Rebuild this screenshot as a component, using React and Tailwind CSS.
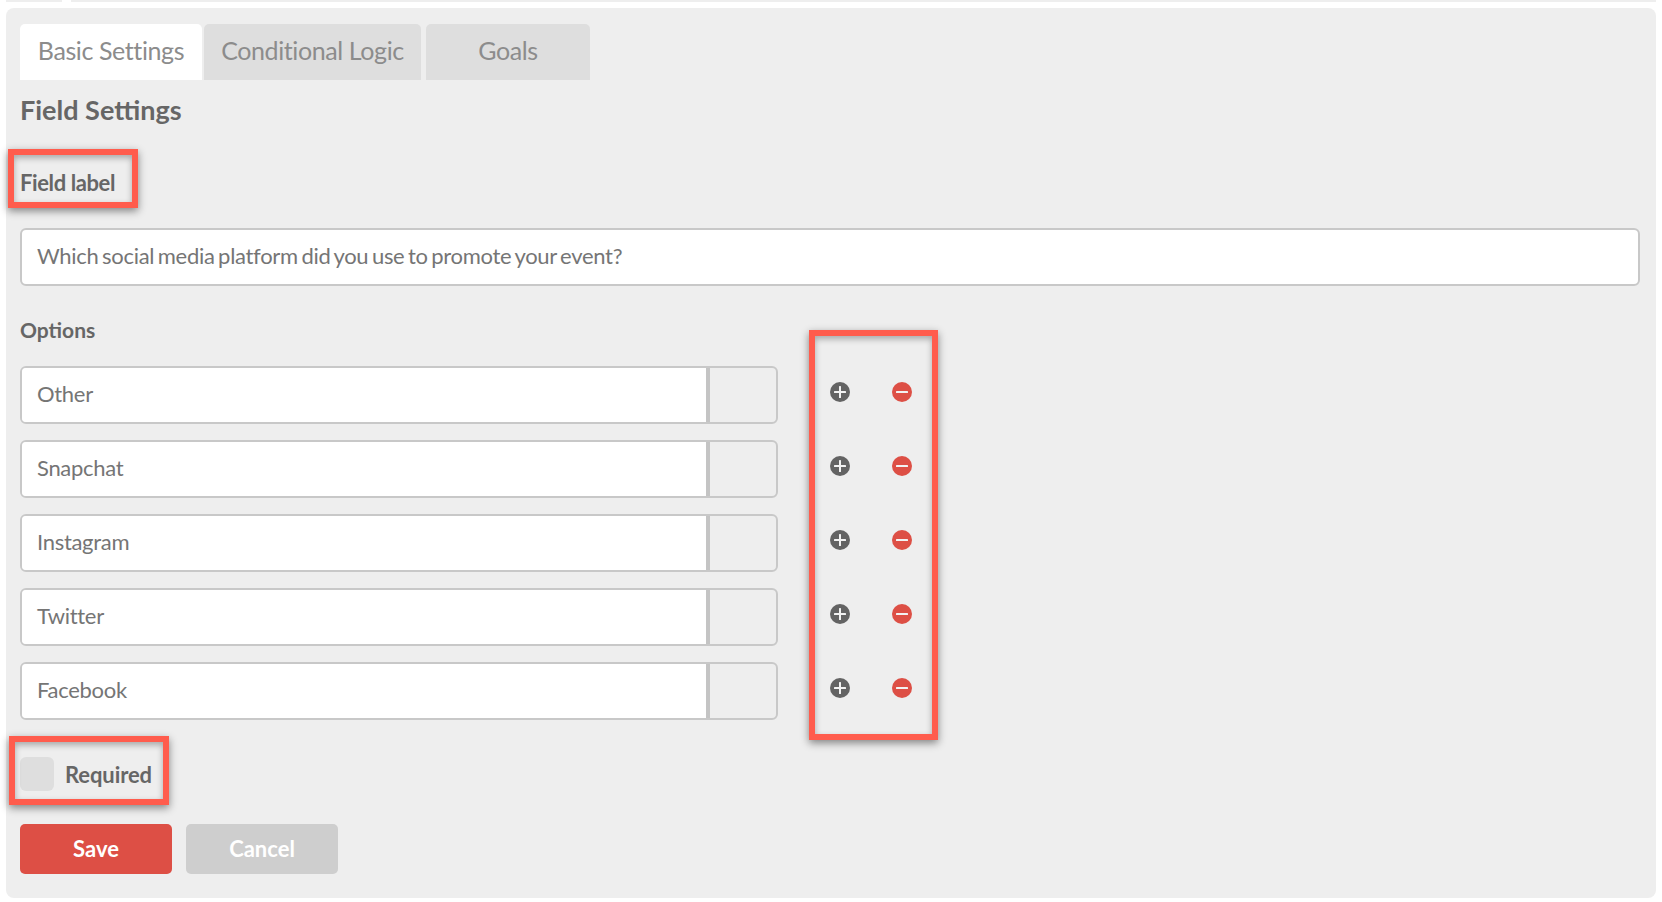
const options = ['Other', 'Snapchat', 'Instagram', 'Twitter', 'Facebook'];

const Callout = ({ className }) => (
  <div className={`absolute border-[6px] border-[#ff5c4d] shadow-[0_3px_8px_rgba(0,0,0,0.45),inset_0_3px_6px_rgba(0,0,0,0.3)] pointer-events-none ${className}`}></div>
);

const RoundIcon = ({ color, plus }) => (
  <svg width="20" height="20" viewBox="0 0 20 20" className="block">
    <circle cx="10" cy="10" r="10" fill={color} />
    <rect x="4" y="9" width="12" height="2" rx="0.5" fill="#f2f2f2" />
    {plus && <rect x="9" y="4" width="2" height="12" rx="0.5" fill="#f2f2f2" />}
  </svg>
);

const OptionRow = ({ label }) => (
  <div className="flex items-center h-[58px]">
    <div className="flex w-[758px] h-[58px] rounded-[6px] border-2 border-[#c8c8c8] overflow-hidden">
      <div className="w-[688px] bg-white border-r-[4px] border-[#c4c4c4] pl-[15px] pb-[4px] flex items-center text-[22px] tracking-[-0.3px] text-[#757575]">{label}</div>
    </div>
    <div className="w-[20px] ml-[52px] mb-[7px]"><RoundIcon color="#636363" plus /></div>
    <div className="w-[20px] ml-[42px] mb-[7px]"><RoundIcon color="#dd4f45" /></div>
  </div>
);

const App = () => {
  return (
    <div className="w-[1662px] h-[902px] bg-white overflow-hidden font-['Lato',sans-serif]">
      <div className="flex h-[2px] pl-[6px] pr-[6px] gap-[9px]">
        <div className="w-[56px] bg-[#eeeeee]"></div>
        <div className="flex-1 bg-[#eeeeee]"></div>
      </div>

      <div className="mt-[6px] ml-[6px] w-[1650px] h-[890px] rounded-lg bg-[#eeeeee] pl-[14px] pt-[16px]">
        <div className="flex h-[56px] text-[25px] tracking-[-0.4px] text-[#8c8c8c]">
          <div className="w-[182px] pb-[2px] rounded-t-[5px] bg-white flex items-center justify-center">Basic Settings</div>
          <div className="w-[217px] pb-[2px] ml-[2px] rounded-t-[5px] bg-[#dedede] flex items-center justify-center">Conditional Logic</div>
          <div className="w-[164px] pb-[2px] ml-[5px] rounded-t-[5px] bg-[#dedede] flex items-center justify-center">Goals</div>
        </div>

        <h2 className="mt-[12px] h-[36px] flex items-center text-[27px] font-bold text-[#666666]">Field Settings</h2>

        <div className="relative mt-[34px] h-[42px] pb-[2px] w-fit flex items-center text-[22px] tracking-[-0.4px] font-bold text-[#666666]">
          Field label
          <Callout className="left-[-12px] top-[-13px] w-[130px] h-[59px]" />
        </div>

        <div className="mt-[24px] w-[1620px] h-[58px] rounded-[6px] border-2 border-[#c8c8c8] bg-white pl-[15px] pb-[4px] flex items-center text-[22px] tracking-[-0.3px] [word-spacing:-1.75px] text-[#757575]">
          Which social media platform did you use to promote your event?
        </div>

        <div className="relative w-fit">
          <div className="mt-[29px] h-[30px] flex items-center text-[21px] font-bold text-[#666666]">Options</div>
          <div className="mt-[21px] flex flex-col gap-[16px]">
            {options.map((item) => (
              <OptionRow key={item} label={item} />
            ))}
          </div>
          <Callout className="left-[789px] top-[15px] w-[129px] h-[410px]" />
        </div>

        <div className="relative mt-[37px] w-fit h-[34px] flex items-center gap-[11px] text-[22px] tracking-[-0.1px] font-bold text-[#666666]">
          <div className="w-[34px] h-[34px] rounded-[6px] bg-[#dedede]"></div>
          Required
          <Callout className="left-[-11px] top-[-21px] w-[160px] h-[69px]" />
        </div>

        <div className="mt-[33px] flex gap-[14px] text-[22px] font-bold text-white">
          <div className="w-[152px] h-[50px] pb-[2px] rounded-[5px] bg-[#dd4f45] flex items-center justify-center">Save</div>
          <div className="w-[152px] h-[50px] pb-[2px] rounded-[5px] bg-[#cecece] flex items-center justify-center">Cancel</div>
        </div>
      </div>
    </div>
  );
};

export default App;
